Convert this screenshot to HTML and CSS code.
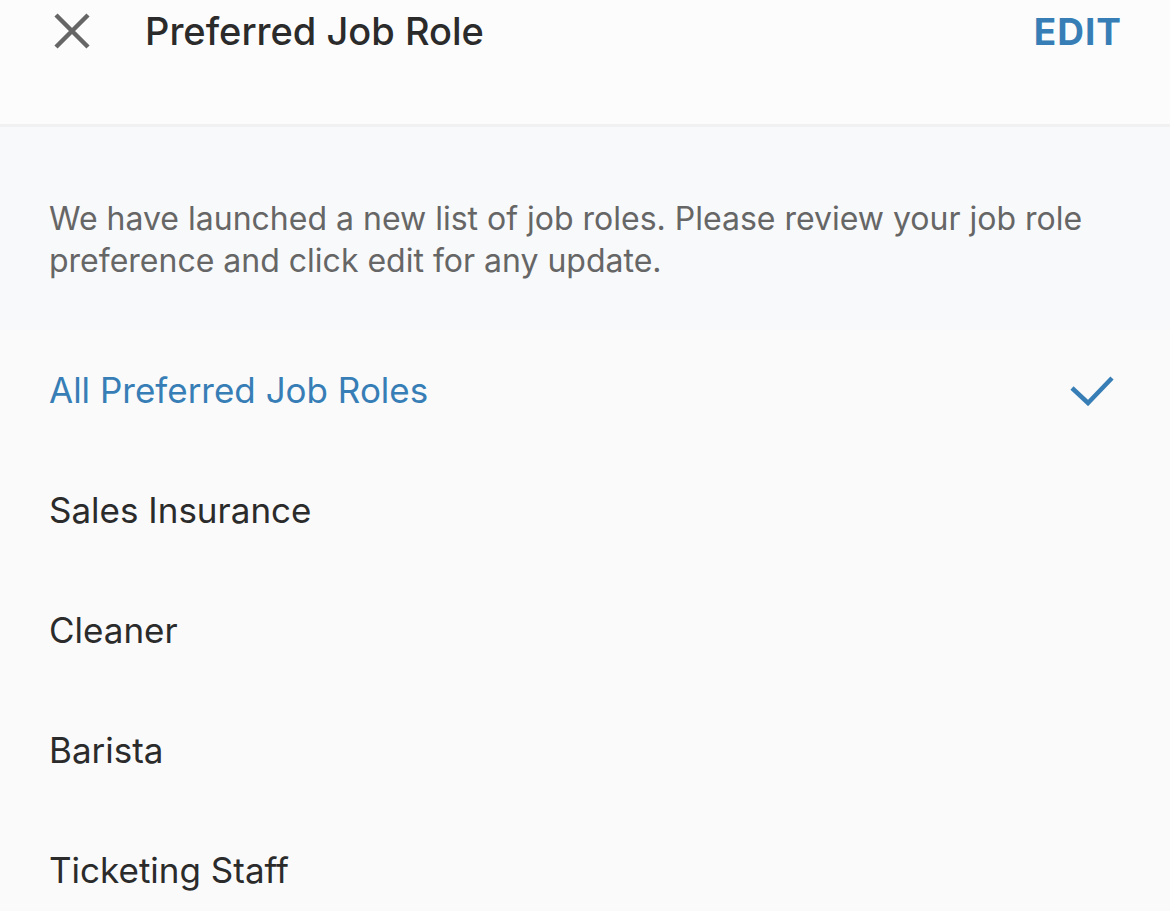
FILE: index.html
```html
<!DOCTYPE html>
<html lang="en">
<head>
    <meta charset="UTF-8">
    <title>Preferred Job Role</title>
    <link rel="stylesheet" href="styles.css">
</head>
<body>
<div class="header">
    <div class="header-row">
        <span class="close">
            <svg width="36" height="36" viewBox="0 0 36 36"><path d="M2 2 L34 34 M34 2 L2 34" stroke="#666" stroke-width="4.5" fill="none"/></svg>
        </span>
        <span class="title">Preferred Job Role</span>
        <span class="edit">EDIT</span>
    </div>
</div>

<div class="notice">
    <p>We have launched a new list of job roles. Please review your job role preference and click edit for any update.</p>
</div>

<ul class="roles">
    <li class="active">
        <span>All Preferred Job Roles</span>
        <svg class="check" width="44" height="32" viewBox="0 0 44 32"><path d="M2 14 L18 29 L42 4" stroke="#377eb6" stroke-width="4.5" fill="none"/></svg>
    </li>
    <li><span>Sales Insurance</span></li>
    <li><span>Cleaner</span></li>
    <li><span>Barista</span></li>
    <li><span>Ticketing Staff</span></li>
</ul>
</body>
</html>
```

FILE: styles.css
```css
body {
    margin: 0;
    background: #fafafa;
    font-family: Inter, "Noto Sans", sans-serif;
    color: #2b2b2b;
}
.header {
    background: #fcfcfc;
    border-bottom: 3px solid #f1f1f1;
    height: 124px;
}
.header-row {
    display: flex;
    align-items: center;
    height: 62px;
    padding: 0 48px 0 54px;
}
.close {
    display: flex;
    width: 36px;
    height: 36px;
    margin-right: 55px;
}
.title {
    flex: 1;
    font-size: 38px;
    font-weight: 500;
    color: #2b2b2b;
}
.edit {
    font-size: 37px;
    font-weight: 700;
    color: #377eb6;
    letter-spacing: 1px;
}
.notice {
    background: #f8f9fa;
    padding: 71px 49px 48px;
}
.notice p {
    margin: 0;
    font-size: 32px;
    line-height: 42px;
    color: #666;
}
.roles {
    list-style: none;
    margin: 0;
    padding: 0;
}
.roles li {
    display: flex;
    align-items: center;
    justify-content: space-between;
    height: 120px;
    padding: 0 56px 0 49px;
    font-size: 35px;
    color: #2b2b2b;
}
.roles li.active {
    color: #377eb6;
}
```
